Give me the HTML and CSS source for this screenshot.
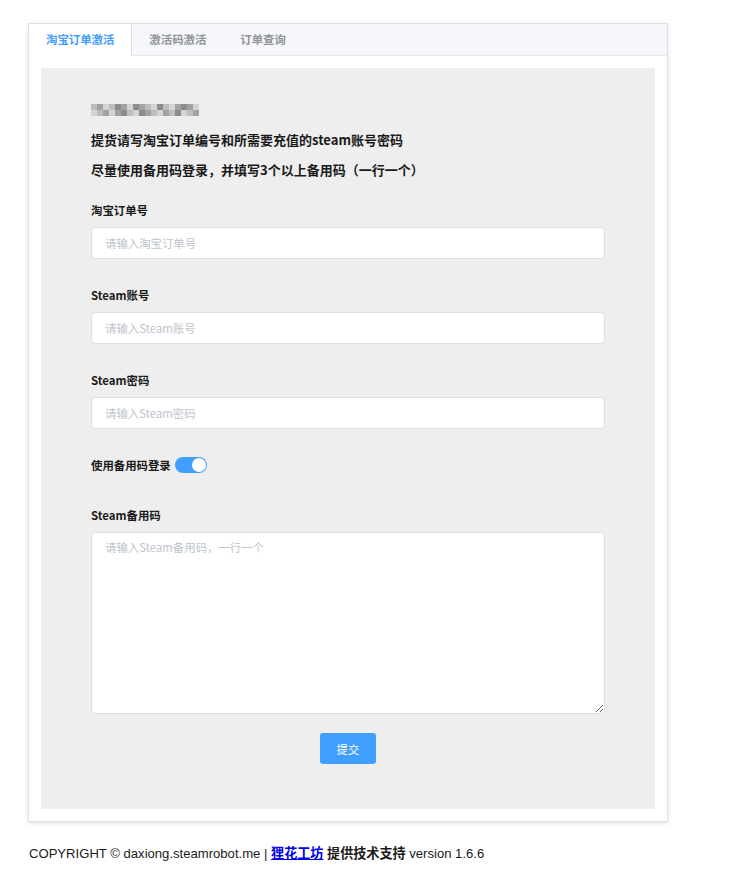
FILE: index.html
```html
<!DOCTYPE html>
<html>
<head>
    <title>淘宝订单激活</title>
    <link rel="stylesheet" href="styles.css">
</head>
<body>
    <div class="page">
        <div class="card">
            <div class="tabs">
                <div class="tab active">淘宝订单激活</div>
                <div class="tab">激活码激活</div>
                <div class="tab">订单查询</div>
            </div>
            <div class="card-body">
                <div class="panel">
                    <!-- blurred notice -->
                    <div class="intro-line">
                        <div class="mosaic">
                            <span class="m1"></span><span class="m2"></span><span class="m3"></span><span class="m1"></span><span class="m4"></span><span class="m2"></span><span class="m3"></span><span class="m4"></span><span class="m2"></span><span class="m1"></span><span class="m3"></span><span class="m4"></span><span class="m1"></span><span class="m3"></span><span class="m2"></span><span class="m4"></span><span class="m2"></span><span class="m3"></span>
                            <span class="m3"></span><span class="m1"></span><span class="m2"></span><span class="m3"></span><span class="m2"></span><span class="m4"></span><span class="m1"></span><span class="m3"></span><span class="m4"></span><span class="m2"></span><span class="m1"></span><span class="m3"></span><span class="m2"></span><span class="m1"></span><span class="m4"></span><span class="m3"></span><span class="m1"></span><span class="m2"></span>
                        </div>
                    </div>
                    <div class="intro-line">提货请写淘宝订单编号和所需要充值的steam账号密码</div>
                    <div class="intro-line">尽量使用备用码登录，并填写3个以上备用码（一行一个）</div>

                    <div class="form">
                        <div class="form-item">
                            <label class="label">淘宝订单号</label>
                            <input class="input" type="text" placeholder="请输入淘宝订单号">
                        </div>
                        <div class="form-item">
                            <label class="label">Steam账号</label>
                            <input class="input" type="text" placeholder="请输入Steam账号">
                        </div>
                        <div class="form-item">
                            <label class="label">Steam密码</label>
                            <input class="input" type="text" placeholder="请输入Steam密码">
                        </div>
                        <div class="form-item switch-item">
                            <label class="label">使用备用码登录</label>
                            <span class="switch"><span class="knob"></span></span>
                        </div>
                        <div class="form-item">
                            <label class="label">Steam备用码</label>
                            <textarea class="textarea" placeholder="请输入Steam备用码，一行一个"></textarea>
                        </div>
                        <div class="actions">
                            <button class="btn">提交</button>
                        </div>
                    </div>
                </div>
            </div>
        </div>

        <p class="footer">COPYRIGHT © daxiong.steamrobot.me | <a href="#">狸花工坊</a> <b>提供技术支持</b> version 1.6.6</p>
    </div>
</body>
</html>
```

FILE: styles.css
```css
body {
    margin: 0;
    background: #fff;
    font-family: "Liberation Sans", Arial, "Noto Sans CJK SC", sans-serif;
    color: #303133;
}

.page {
    padding: 23px 0 0 28px;
}

.card {
    width: 638px;
    border: 1px solid #dcdfe6;
    background: #fff;
    box-shadow: 0 2px 4px rgba(0,0,0,0.08), 0 0 6px rgba(0,0,0,0.04);
}

.tabs {
    display: flex;
    height: 31px;
    background: #f5f7fa;
    border-bottom: 1px solid #e4e7ed;
}

.tab {
    padding: 0 17px;
    font-size: 11.4px;
    font-weight: bold;
    line-height: 31px;
    color: #909399;
    font-family: "Noto Sans CJK SC", sans-serif;
}

.tab.active {
    background: #fff;
    color: #409eff;
    border-right: 1px solid #dcdfe6;
    margin-bottom: -1px;
    height: 32px;
}

.card-body {
    padding: 12px;
}

.panel {
    background: #eeeeee;
    padding: 27px 50px 45px;
}

.intro-line {
    height: 30px;
    line-height: 30px;
    font-size: 13px;
    font-weight: bold;
    color: #1a1a1a;
    font-family: "Noto Sans CJK SC", sans-serif;
    display: flex;
    align-items: center;
}

.mosaic {
    display: grid;
    grid-template-columns: repeat(18, 6px);
    grid-template-rows: 6px 6px;
    opacity: 0.85;
}

.mosaic span { display: block; }
.m1 { background: #b5b5b5; }
.m2 { background: #959595; }
.m3 { background: #d0d0d0; }
.m4 { background: #7c7c7c; }

.form {
    margin-top: 15px;
}

.form-item {
    margin-bottom: 26px;
}

.label {
    display: block;
    height: 20px;
    line-height: 20px;
    margin-bottom: 7px;
    font-size: 11.4px;
    font-weight: bold;
    color: #1a1a1a;
    font-family: "Noto Sans CJK SC", sans-serif;
}

.input, .textarea {
    display: block;
    width: 100%;
    box-sizing: border-box;
    border: 1px solid #dcdfe6;
    border-radius: 4px;
    background: #fff;
    font-size: 11.4px;
    color: #606266;
    font-family: "Noto Sans CJK SC", sans-serif;
    outline: none;
}

.input {
    height: 32px;
    padding: 0 13px;
}

.textarea {
    height: 182px;
    padding: 4px 13px;
    line-height: 20px;
    resize: vertical;
}

.input::placeholder, .textarea::placeholder {
    color: #c0c4cc;
}

.switch-item {
    display: flex;
    align-items: center;
    gap: 4px;
    height: 20px;
    margin-bottom: 30px;
}

.switch-item .label {
    margin-bottom: 0;
}

.switch {
    position: relative;
    width: 32px;
    height: 16px;
    border-radius: 8px;
    background: #409eff;
}

.knob {
    position: absolute;
    top: 1px;
    right: 1px;
    width: 14px;
    height: 14px;
    border-radius: 50%;
    background: #fff;
}

.actions {
    text-align: center;
    margin-top: -7px;
}

.btn {
    height: 31px;
    padding: 0 17px;
    border: none;
    border-radius: 3px;
    background: #409eff;
    color: #fff;
    font-size: 11.4px;
    font-family: "Noto Sans CJK SC", sans-serif;
}

.footer {
    margin: 22px 0 0 1px;
    font-size: 13.1px;
    line-height: 20px;
    color: #1a1a1a;
}

.footer a {
    color: #0000ee;
    font-weight: bold;
}
```
